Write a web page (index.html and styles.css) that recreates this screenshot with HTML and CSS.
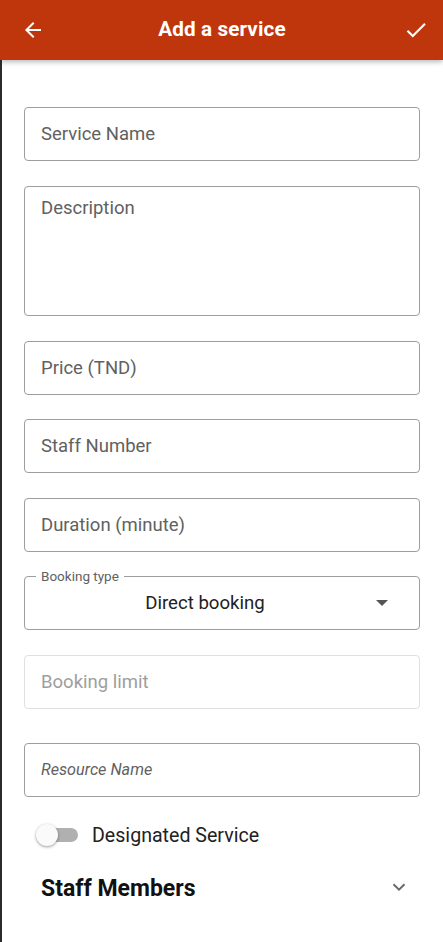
FILE: index.html
```html
<!DOCTYPE html>
<html>
<head>
<meta charset="utf-8">
<link rel="stylesheet" href="styles.css">
</head>
<body>
<div class="app">
  <header class="appbar">
    <svg class="icon back" viewBox="0 0 24 24" width="24" height="24"><path d="M20 11H7.83l5.59-5.59L12 4l-8 8 8 8 1.41-1.41L7.83 13H20v-2z" fill="#fff"/></svg>
    <h1 class="title">Add a service</h1>
    <svg class="icon check" viewBox="0 0 24 24" width="26" height="26"><path d="M9 16.17L4.83 12l-1.42 1.41L9 19 21 7l-1.41-1.41z" fill="#fff"/></svg>
  </header>
  <main class="form">
    <div class="field"><span class="ph">Service Name</span></div>
    <div class="field area"><span class="ph">Description</span></div>
    <div class="field"><span class="ph">Price (TND)</span></div>
    <div class="field"><span class="ph">Staff Number</span></div>
    <div class="field"><span class="ph">Duration (minute)</span></div>
    <div class="field select">
      <span class="legend">Booking type</span>
      <span class="value">Direct booking</span>
      <svg class="caret" viewBox="0 0 10 5" width="12" height="6"><path d="M0 0l5 5 5-5z" fill="#555"/></svg>
    </div>
    <div class="field disabled"><span class="ph">Booking limit</span></div>
    <div class="field resource"><span class="ph italic">Resource Name</span></div>
    <div class="toggle-row">
      <span class="switch"><span class="track"></span><span class="thumb"></span></span>
      <span class="toggle-label">Designated Service</span>
    </div>
    <div class="staff-row">
      <span class="staff-title">Staff Members</span>
      <svg class="chev" viewBox="0 0 24 24" width="22" height="22"><path d="M6 9l6 6 6-6" fill="none" stroke="#666" stroke-width="2"/></svg>
    </div>
  </main>
</div>
</body>
</html>
```
FILE: styles.css
```css
* { box-sizing: border-box; }
html, body { margin: 0; padding: 0; background: #fff; }
body { font-family: Roboto, "Noto Sans", Arial, sans-serif; }
.app { width: 443px; min-height: 942px; border-left: 2px solid #2b2b2b; position: relative; }
.appbar {
  height: 60px;
  margin-left: -2px;
  background: #bf360c;
  display: flex;
  align-items: center;
  justify-content: space-between;
  padding: 0 14px 0 21px;
  box-shadow: 0 2px 5px rgba(0,0,0,0.28);
  position: relative;
  z-index: 1;
}
.title { margin: 0 0 2px 0; color: #fff; font-size: 20.7px; font-weight: 700; letter-spacing: 0.1px; transform: translateX(-2px); }
.icon { display: block; }
.form { padding: 47px 23px 0 22px; display: flex; flex-direction: column; }
.field {
  height: 54px;
  border: 1px solid #9e9e9e;
  border-radius: 4px;
  padding: 0 16px;
  display: flex;
  align-items: center;
  margin-bottom: 24.5px;
  position: relative;
  flex-shrink: 0;
}
.field.area { height: 130.5px; align-items: flex-start; padding-top: 10px; }
.ph { font-size: 18.5px; color: #616161; }
.ph.italic { font-style: italic; font-size: 16.2px; }
.field.select { justify-content: center; }
.legend {
  position: absolute; top: -9px; left: 11px;
  background: #fff; padding: 0 5px;
  font-size: 13.5px; color: #616161;
}
.value { font-size: 18.6px; color: #212121; margin-left: -34px; }
.caret { position: absolute; right: 31px; top: 23px; }
.field.disabled { border-color: #e0e0e0; margin-bottom: 34px; }
.field.disabled .ph { color: #9e9e9e; }
.toggle-row { display: flex; align-items: center; height: 40px; margin-top: -6px; padding-left: 12px; }
.switch { position: relative; width: 44px; height: 22px; display: inline-block; }
.track { position: absolute; left: 10px; top: 4px; width: 32px; height: 14px; border-radius: 7px; background: #b0b0b0; }
.thumb { position: absolute; left: 0; top: 0; width: 22px; height: 22px; border-radius: 50%; background: #fafafa; box-shadow: 0 1px 3px rgba(0,0,0,0.4); }
.toggle-label { font-size: 19.6px; color: #212121; margin-left: 12px; }
.staff-row { display: flex; align-items: center; justify-content: space-between; padding: 0 10px 0 17px; margin-top: 20px; }
.staff-title { font-size: 23px; font-weight: 700; color: #111; }
.chev { margin-top: -4px; }
```
